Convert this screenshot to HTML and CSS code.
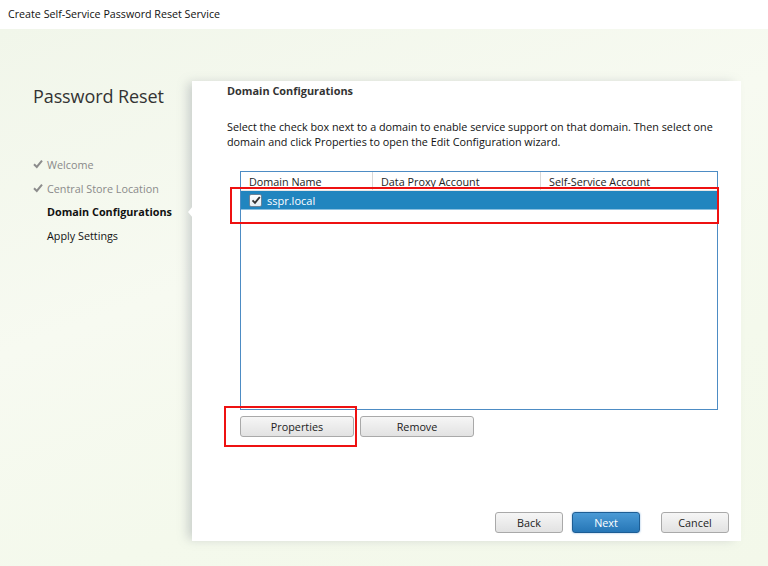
FILE: index.html
```html
<!DOCTYPE html>
<html>
<head>
<meta charset="utf-8">
<link rel="stylesheet" href="styles.css">
</head>
<body>
<div class="titlebar">Create Self-Service Password Reset Service</div>
<div class="main">
  <div class="sidebar">
    <h1 class="brand">Password Reset</h1>
    <ul class="steps">
      <li class="step done"><svg class="chk" viewBox="0 0 10 10" width="10" height="10"><path d="M1 5.2 L3.8 8 L9 1.6" fill="none" stroke="#8c8c8c" stroke-width="2"/></svg>Welcome</li>
      <li class="step done"><svg class="chk" viewBox="0 0 10 10" width="10" height="10"><path d="M1 5.2 L3.8 8 L9 1.6" fill="none" stroke="#8c8c8c" stroke-width="2"/></svg>Central Store Location</li>
      <li class="step current">Domain Configurations</li>
      <li class="step">Apply Settings</li>
    </ul>
  </div>
  <div class="panel">
    <div class="notch"></div>
    <h2 class="heading">Domain Configurations</h2>
    <p class="desc">Select the check box next to a domain to enable service support on that domain. Then select one domain and click Properties to open the Edit Configuration wizard.</p>
    <div class="tablewrap">
      <div class="table">
        <div class="thead">
          <div class="th c1">Domain Name</div>
          <div class="th c2">Data Proxy Account</div>
          <div class="th c3">Self-Service Account</div>
        </div>
        <div class="row selected">
          <span class="cbox"><svg viewBox="0 0 10 10" width="10" height="10"><path d="M1.5 5.3 L4 7.8 L8.8 2" fill="none" stroke="#333" stroke-width="1.9"/></svg></span>
          <span class="rowtext">sspr.local</span>
        </div>
      </div>
      <div class="redbox rowmark"></div>
    </div>
    <div class="tablebtns">
      <button class="btn wide">Properties</button>
      <button class="btn wide">Remove</button>
      <div class="redbox propmark"></div>
    </div>
    <div class="footer">
      <button class="btn nav">Back</button>
      <button class="btn nav primary">Next</button>
      <button class="btn nav cancel">Cancel</button>
    </div>
  </div>
</div>
</body>
</html>
```

FILE: styles.css
```css
* { box-sizing: border-box; }
html, body { margin: 0; padding: 0; }
body {
  width: 768px;
  height: 566px;
  overflow: hidden;
  font-family: "Open Sans", "Noto Sans", "Liberation Sans", sans-serif;
  font-size: 10.8px;
  color: #222;
  background: #fff;
}
.titlebar {
  height: 29px;
  padding-left: 8px;
  line-height: 28px;
  font-size: 10.7px;
  color: #111;
  background: #fff;
}
.main {
  height: 537px;
  display: flex;
  background: linear-gradient(160deg, #f1f6ea 0%, #f7faf1 40%, #f4f9ec 70%, #f3f8ea 100%);
}
.sidebar {
  width: 192px;
  flex: none;
  padding-left: 33px;
}
.brand {
  margin: 54px 0 0 0;
  font-size: 18px;
  font-weight: 500;
  color: #333;
  line-height: 26px;
  letter-spacing: -0.1px;
}
.steps {
  list-style: none;
  margin: 0;
  padding: 0;
  margin-top: 44px;
}
.step {
  height: 23.7px;
  line-height: 24px;
  padding-left: 14px;
  position: relative;
  color: #111;
}
.step.done { color: #8a8a8a; }
.step.current { font-weight: 700; color: #111; }
.chk {
  position: absolute;
  left: 0;
  top: 6px;
}
.panel {
  position: relative;
  width: 549px;
  flex: none;
  margin-top: 52px;
  height: 460px;
  padding-left: 35px;
  background: #fff;
  box-shadow: -6px 0 10px -2px rgba(120, 130, 140, 0.35);
}
.notch {
  position: absolute;
  left: -4px;
  top: 125px;
  width: 0;
  height: 0;
  border-top: 6px solid transparent;
  border-bottom: 6px solid transparent;
  border-right: 5px solid #fff;
}
.heading {
  margin: 0;
  padding-top: 1px;
  font-size: 10.9px;
  font-weight: 700;
  line-height: 18px;
  color: #333;
}
.desc {
  margin: 19px 0 0 0;
  width: 495px;
  line-height: 15px;
  color: #111;
}
.tablewrap {
  position: relative;
  margin-top: 22px;
  margin-left: 13px;
  width: 478px;
}
.table {
  height: 239px;
  border: 1px solid #4d8cc4;
  background: #fff;
}
.thead {
  display: flex;
  height: 19px;
  border-bottom: 1px solid #e6e6e6;
}
.th {
  line-height: 20px;
  padding-left: 8px;
  color: #222;
  border-right: 1px solid #d8d8d8;
  white-space: nowrap;
}
.c1 { width: 132px; }
.c2 { width: 168px; }
.c3 { flex: 1; border-right: none; }
.row {
  display: flex;
  align-items: center;
  height: 19px;
}
.row.selected { background: #2185bf; border-bottom: 1px solid #8cc0e0; }
.cbox {
  margin-left: 8px;
  width: 13px;
  height: 13px;
  border: 1px solid #6b8398;
  border-radius: 2px;
  background: linear-gradient(#ffffff, #e6eef4);
  display: flex;
  align-items: center;
  justify-content: center;
}
.rowtext {
  margin-left: 5px;
  color: #fff;
  font-size: 11px;
}
.redbox {
  position: absolute;
  border: 2px solid #ee1111;
}
.rowmark {
  left: -10px;
  top: 16px;
  width: 489px;
  height: 37px;
}
.tablebtns {
  position: relative;
  display: flex;
  gap: 6px;
  margin-top: 6px;
  margin-left: 13px;
}
.btn {
  font-family: inherit;
  font-size: 10.8px;
  color: #222;
  height: 21px;
  padding: 0;
  border: 1px solid #a9a9a9;
  border-radius: 3px;
  background: linear-gradient(#f6f6f6, #e2e2e2);
}
.wide { width: 114px; }
.propmark {
  left: -16px;
  top: -10px;
  width: 133px;
  height: 41px;
}
.footer {
  display: flex;
  margin-top: 75px;
  margin-left: 268px;
}
.nav { width: 68px; }
.primary {
  margin-left: 9px;
  color: #fff;
  border-color: #1d5d94;
  background: linear-gradient(#4a9ad6, #2676b6);
  box-shadow: 0 0 2px rgba(40, 120, 200, 0.6);
}
.cancel { margin-left: 21px; }
```
